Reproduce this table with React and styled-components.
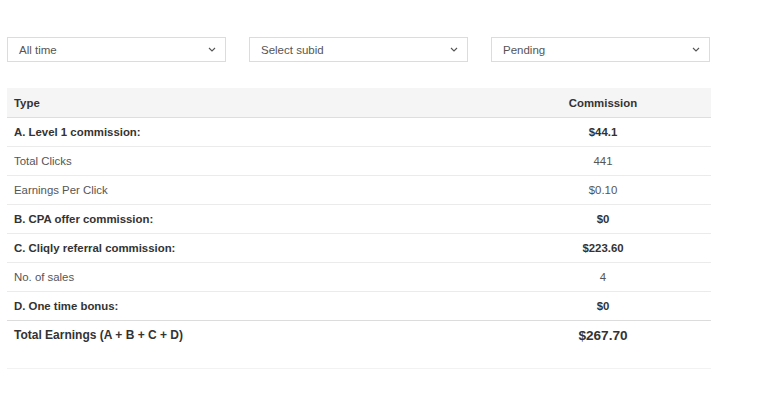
import React from "react";
import styled, { createGlobalStyle } from "styled-components";

const GlobalStyle = createGlobalStyle`
  body {
    margin: 0;
    background: #fff;
    font-family: "Liberation Sans", Arial, sans-serif;
    color: #333;
  }
`;

const Page = styled.div`
  width: 704px;
  padding: 37px 0 0 7px;
`;

const Filters = styled.div`
  display: grid;
  grid-template-columns: 219px 219px 219px;
  column-gap: 23px;
  margin-bottom: 26px;
`;

const SelectBox = styled.div`
  height: 25px;
  box-sizing: border-box;
  border: 1px solid #dcdcdc;
  display: flex;
  align-items: center;
  justify-content: space-between;
  padding: 0 9px 0 11px;
  font-size: 11.5px;
  color: #555;
`;

const Table = styled.table`
  width: 704px;
  border-collapse: collapse;
  font-size: 11.4px;
`;

const HeadCell = styled.th`
  background: #f5f5f5;
  height: 29px;
  padding: 0 7px;
  font-weight: bold;
  color: #333;
  text-align: ${(p) => (p.$center ? "center" : "left")};
  border-bottom: 1.5px solid #dedede;
`;

const Cell = styled.td`
  height: 28px;
  padding: 0 7px;
  border-bottom: 1px solid ${(p) => (p.$strong ? "#dcdcdc" : "#ebebeb")};
  font-weight: ${(p) => (p.$bold ? "bold" : "normal")};
  color: ${(p) => (p.$bold ? "#333" : "#555")};
  text-align: ${(p) => (p.$center ? "center" : "left")};
`;

const TotalCell = styled.td`
  height: 48px;
  padding: 7px 7px 0;
  vertical-align: top;
  font-weight: bold;
  color: #333;
  font-size: ${(p) => (p.$big ? "13.6px" : "12px")};
  text-align: ${(p) => (p.$center ? "center" : "left")};
  border-bottom: 1px solid #f2f2f2;
  box-sizing: border-box;
`;

const Chevron = () => (
  <svg width="8" height="5" viewBox="0 0 8 5">
    <path d="M1 1l3 3 3-3" fill="none" stroke="#555" strokeWidth="1.1" />
  </svg>
);

const rows = [
  ["A. Level 1 commission:", "$44.1", true],
  ["Total Clicks", "441", false],
  ["Earnings Per Click", "$0.10", false],
  ["B. CPA offer commission:", "$0", true],
  ["C. Cliqly referral commission:", "$223.60", true],
  ["No. of sales", "4", false],
  ["D. One time bonus:", "$0", true],
];

export default function App() {
  return (
    <>
      <GlobalStyle />
      <Page>
        <Filters>
          {["All time", "Select subid", "Pending"].map((t) => (
            <SelectBox key={t}>
              {t}
              <Chevron />
            </SelectBox>
          ))}
        </Filters>
        <Table>
          <thead>
            <tr>
              <HeadCell style={{ width: 474 }}>Type</HeadCell>
              <HeadCell $center>Commission</HeadCell>
            </tr>
          </thead>
          <tbody>
            {rows.map(([label, value, bold], i) => (
              <tr key={label}>
                <Cell $bold={bold} $strong={i === rows.length - 1}>{label}</Cell>
                <Cell $bold={bold} $center $strong={i === rows.length - 1}>{value}</Cell>
              </tr>
            ))}
            <tr>
              <TotalCell>Total Earnings (A + B + C + D)</TotalCell>
              <TotalCell $center $big>$267.70</TotalCell>
            </tr>
          </tbody>
        </Table>
      </Page>
    </>
  );
}
